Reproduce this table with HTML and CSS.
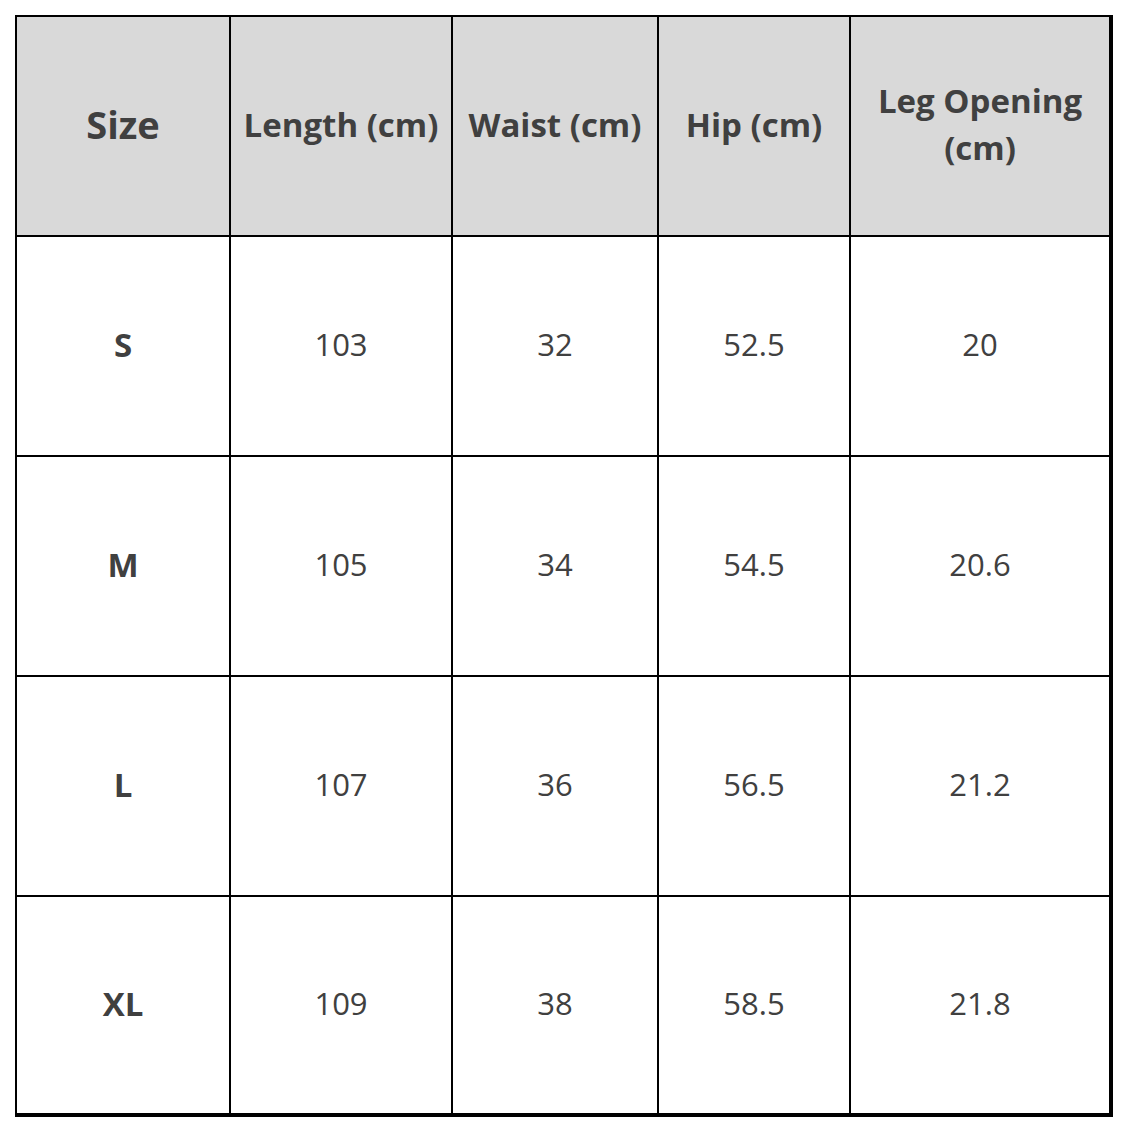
FILE: index.html
```html
<!DOCTYPE html>
<html lang="en">
<head>
<meta charset="utf-8">
<title>Size Chart</title>
<link rel="stylesheet" href="styles.css">
</head>
<body>
<table class="size-table">
  <thead>
    <tr>
      <th class="c1 head-size">Size</th>
      <th class="c2">Length (cm)</th>
      <th class="c3">Waist (cm)</th>
      <th class="c4">Hip (cm)</th>
      <th class="c5">Leg Opening (cm)</th>
    </tr>
  </thead>
  <tbody>
    <tr><td class="size">S</td><td>103</td><td>32</td><td>52.5</td><td>20</td></tr>
    <tr><td class="size">M</td><td>105</td><td>34</td><td>54.5</td><td>20.6</td></tr>
    <tr><td class="size">L</td><td>107</td><td>36</td><td>56.5</td><td>21.2</td></tr>
    <tr><td class="size">XL</td><td>109</td><td>38</td><td>58.5</td><td>21.8</td></tr>
  </tbody>
</table>
</body>
</html>
```
FILE: styles.css
```css
html, body {
  background: #ffffff;
}
body {
  margin: 15px;
  font-family: "Open Sans", "Noto Sans", "DejaVu Sans", sans-serif;
  color: #404040;
}
.size-table {
  border-collapse: separate;
  border-spacing: 0;
  table-layout: fixed;
  width: 1098px;
  border-top: 2px solid #000;
  border-left: 2px solid #000;
}
.size-table th,
.size-table td {
  box-sizing: border-box;
  height: 220px;
  padding: 0 6px 4px;
  border-right: 2px solid #000;
  border-bottom: 2px solid #000;
  text-align: center;
  vertical-align: middle;
  font-size: 31px;
  line-height: 47px;
}
.size-table th {
  background: #d9d9d9;
  font-weight: 700;
  font-size: 33px;
}
.size-table th.head-size {
  font-size: 38px;
}
.size-table td {
  font-weight: 400;
}
.size-table td.size {
  font-weight: 700;
  font-size: 33px;
}
.size-table th:last-child,
.size-table td:last-child {
  border-right-width: 4px;
}
.size-table tbody tr:last-child td {
  border-bottom-width: 4px;
}
.c1 { width: 214px; }
.c2 { width: 222px; }
.c3 { width: 206px; }
.c4 { width: 192px; }
.c5 { width: 262px; }
```
